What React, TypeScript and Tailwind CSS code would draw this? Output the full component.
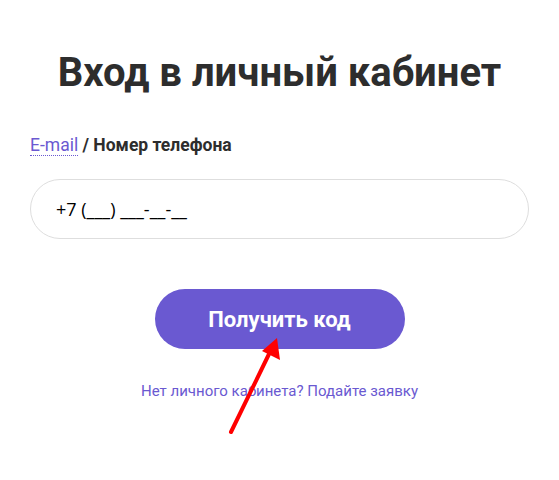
export default function App() {
  return (
    <div className="relative h-[480px] w-[559px] bg-white font-['Roboto',sans-serif]">
      <div className="flex flex-col px-[30px] pt-[48px]">
        <h1 className="text-center text-[40px] font-bold leading-[50px] text-[#2d2d2d]">
          Вход в личный кабинет
        </h1>
        <div className="mt-[36px] text-[17.5px] leading-[22px]">
          <span className="border-b border-dotted border-[#6a59d1] text-[#6a59d1]">E-mail</span>
          <span className="font-bold text-[#2d2d2d]"> / Номер телефона</span>
        </div>
        <div className="mt-[23px] flex h-[60px] items-center rounded-full border border-[#dedede] px-[25px]">
          <span className="font-['Open_Sans',sans-serif] text-[18px] text-black">
            +7 (___) ___-__-__
          </span>
        </div>
        <button className="mx-auto mt-[50px] h-[60px] w-[250px] rounded-full bg-[#6a59d1] text-[22px] font-bold text-white">
          Получить код
        </button>
        <a className="mt-[33px] text-center text-[15px] leading-[18px] text-[#6a59d1]">
          Нет личного кабинета? Подайте заявку
        </a>
      </div>
      <svg className="pointer-events-none absolute left-0 top-0" width="559" height="480">
        <line x1="231" y1="432" x2="270" y2="352" stroke="#ff0000" strokeWidth="4" strokeLinecap="round" />
        <polygon points="277,338 280,360 262,351" fill="#ff0000" />
      </svg>
    </div>
  )
}
